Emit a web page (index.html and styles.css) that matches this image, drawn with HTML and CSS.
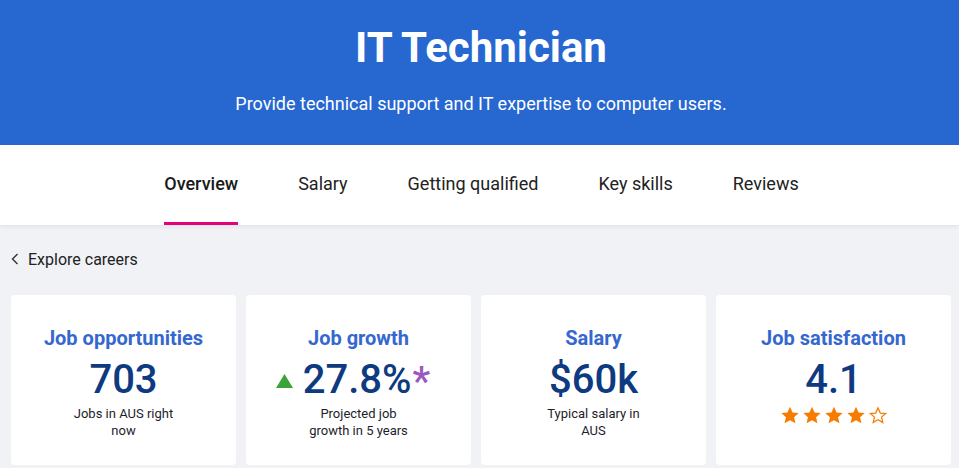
FILE: index.html
```html
<!DOCTYPE html>
<html lang="en">
<head>
<meta charset="utf-8">
<title>IT Technician</title>
<link rel="stylesheet" href="styles.css">
</head>
<body>
<header class="hero">
  <h1 class="hero-title">IT Technician</h1>
  <p class="hero-sub">Provide technical support and IT expertise to computer users.</p>
</header>
<nav class="tabs">
  <a class="tab active">Overview</a>
  <a class="tab">Salary</a>
  <a class="tab">Getting qualified</a>
  <a class="tab">Key skills</a>
  <a class="tab">Reviews</a>
</nav>
<main class="main">
  <a class="back">
    <svg class="chev" width="8" height="12" viewBox="0 0 8 12"><path d="M6.5 1 L1.5 6 L6.5 11" fill="none" stroke="#333" stroke-width="1.4"/></svg>
    <span>Explore careers</span>
  </a>
  <section class="cards">
    <div class="card">
      <h2 class="card-title">Job opportunities</h2>
      <div class="card-value">703</div>
      <p class="card-cap">Jobs in AUS right now</p>
    </div>
    <div class="card">
      <h2 class="card-title">Job growth</h2>
      <div class="card-value"><svg class="tri" width="17" height="14" viewBox="0 0 17 14"><path d="M8.5 0 L17 14 L0 14 Z" fill="#3ca33a"/></svg>27.8%<span class="ast">*</span></div>
      <p class="card-cap">Projected job growth in 5 years</p>
    </div>
    <div class="card">
      <h2 class="card-title">Salary</h2>
      <div class="card-value">$60k</div>
      <p class="card-cap">Typical salary in AUS</p>
    </div>
    <div class="card">
      <h2 class="card-title">Job satisfaction</h2>
      <div class="card-value">4.1</div>
      <div class="stars">
        <svg width="20" height="19" viewBox="0 0 24 23"><path d="M12 1 L15.1 8 L22.5 8.6 L16.9 13.6 L18.6 21 L12 17.1 L5.4 21 L7.1 13.6 L1.5 8.6 L8.9 8 Z" fill="#f57c00"/></svg>
        <svg width="20" height="19" viewBox="0 0 24 23"><path d="M12 1 L15.1 8 L22.5 8.6 L16.9 13.6 L18.6 21 L12 17.1 L5.4 21 L7.1 13.6 L1.5 8.6 L8.9 8 Z" fill="#f57c00"/></svg>
        <svg width="20" height="19" viewBox="0 0 24 23"><path d="M12 1 L15.1 8 L22.5 8.6 L16.9 13.6 L18.6 21 L12 17.1 L5.4 21 L7.1 13.6 L1.5 8.6 L8.9 8 Z" fill="#f57c00"/></svg>
        <svg width="20" height="19" viewBox="0 0 24 23"><path d="M12 1 L15.1 8 L22.5 8.6 L16.9 13.6 L18.6 21 L12 17.1 L5.4 21 L7.1 13.6 L1.5 8.6 L8.9 8 Z" fill="#f57c00"/></svg>
        <svg width="20" height="19" viewBox="0 0 24 23"><path d="M12 2.3 L14.8 8.6 L21.3 9.1 L16.3 13.5 L17.8 20 L12 16.5 L6.2 20 L7.7 13.5 L2.7 9.1 L9.2 8.6 Z" fill="none" stroke="#f57c00" stroke-width="1.5" stroke-linejoin="miter"/></svg>
      </div>
    </div>
  </section>
</main>
</body>
</html>
```
FILE: styles.css
```css
* { box-sizing: border-box; }
html, body { margin: 0; padding: 0; }
body {
  font-family: Roboto, "Liberation Sans", Arial, sans-serif;
  background: #f0f2f6;
  color: #1d1d2b;
  width: 959px;
  height: 468px;
  overflow: hidden;
}
.hero {
  background: #2767d0;
  color: #fff;
  height: 145px;
  text-align: center;
  padding-top: 24px;
  padding-left: 3px;
}
.hero-title {
  margin: 0;
  font-size: 42px;
  font-weight: 700;
  line-height: 48px;
}
.hero-sub {
  margin: 21px 0 0;
  font-size: 18px;
  line-height: 22px;
}
.tabs {
  background: #fff;
  height: 80px;
  display: flex;
  justify-content: center;
  gap: 60px;
  padding-left: 4px;
  box-shadow: 0 2px 4px rgba(0,0,0,0.06);
  position: relative;
}
.tab {
  display: flex;
  align-items: center;
  font-size: 18px;
  color: #222;
  border-bottom: 3px solid transparent;
  padding-bottom: 1px;
}
.tab.active {
  font-weight: 500;
  color: #1a1a1a;
  border-bottom-color: #e5007d;
}
.main {
  padding: 24px 8px 0 11px;
}
.back {
  display: flex;
  align-items: center;
  gap: 9px;
  font-size: 16px;
  color: #222;
  height: 20px;
}
.cards {
  margin-top: 26px;
  display: grid;
  grid-template-columns: 225px 225px 225px 235px;
  gap: 10px;
}
.card {
  background: #fff;
  border-radius: 4px;
  height: 170px;
  display: flex;
  flex-direction: column;
  align-items: center;
  padding-top: 30px;
}
.card-title {
  margin: 0;
  font-size: 20px;
  font-weight: 700;
  color: #3467cf;
  line-height: 26px;
}
.card-value {
  margin-top: 4px;
  font-size: 40px;
  font-weight: 500;
  line-height: 50px;
  color: #0d3a80;
  display: flex;
  align-items: center;
}
.tri { margin-right: 10px; margin-top: 2px; }
.ast {
  color: #9b59c0;
  font-size: 40px;
  font-weight: 500;
  align-self: flex-start;
  line-height: 42px;
  margin-top: 6px;
  margin-left: 1px;
  margin-right: 11px;
}
.card-cap {
  margin: 0;
  font-size: 13px;
  line-height: 17px;
  text-align: center;
  max-width: 112px;
  color: #1d1d2b;
}
.stars {
  display: flex;
  gap: 2px;
  margin-top: 1px;
}
```
